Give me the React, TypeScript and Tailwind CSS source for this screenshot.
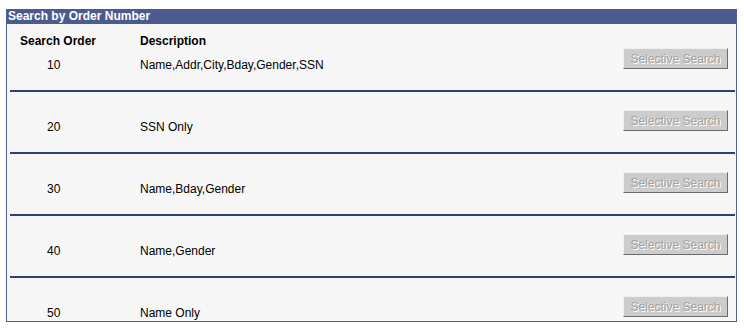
import React from 'react';

/**
 * 搜索顺序行
 */
interface SearchRow {
  order: number;
  description: string;
}

const rows: SearchRow[] = [
  { order: 10, description: 'Name,Addr,City,Bday,Gender,SSN' },
  { order: 20, description: 'SSN Only' },
  { order: 30, description: 'Name,Bday,Gender' },
  { order: 40, description: 'Name,Gender' },
  { order: 50, description: 'Name Only' },
];

const SelectiveSearchButton: React.FC = () => (
  <button
    disabled
    className="h-[21px] w-[105px] bg-[#cccccc] border border-t-[#f0f0f0] border-l-[#f0f0f0] border-b-[#6b6b6b] border-r-[#6b6b6b] text-[12px] leading-[14px] text-[#a3a3a3] [text-shadow:1px_1px_0_#ffffff] cursor-default"
  >
    Selective Search
  </button>
);

const RowContent: React.FC<{ row: SearchRow }> = ({ row }) => (
  <div className="flex items-start">
    <div className="w-[133px] pl-[40px] mt-[10px] leading-[14px]">{row.order}</div>
    <div className="flex-1 mt-[10px] leading-[14px]">{row.description}</div>
    <div className="mr-[8px]">
      <SelectiveSearchButton />
    </div>
  </div>
);

export default function App() {
  return (
    <div className="w-[744px] h-[330px] bg-white pt-[9px] pl-[6px] font-['Liberation_Sans',Arial,sans-serif] text-[12px] text-black">
      <div className="w-[731px] h-[313px] flex flex-col border border-t-0 border-[#4d5f96] bg-[#f7f7f7] overflow-hidden">
        {/* 标题栏 */}
        <div className="h-[15px] -mx-px bg-[#4b5b8e] text-white font-bold leading-[15px] pl-[2px]">
          Search by Order Number
        </div>

        {/* 列标题 */}
        <div className="flex mt-[10px] h-[14px] leading-[14px] font-bold">
          <div className="w-[133px] pl-[13px]">Search Order</div>
          <div className="flex-1">Description</div>
        </div>

        {/* 行 */}
        {rows.map((row, i) => (
          <div key={row.order}>
            {i > 0 && <div className="h-[2px] ml-[3px] mr-[1px] bg-[#2c4275]" />}
            <div className={i === 0 ? 'h-[42px]' : 'h-[60px] pt-[18px]'}>
              <RowContent row={row} />
            </div>
          </div>
        ))}
      </div>
    </div>
  );
}
